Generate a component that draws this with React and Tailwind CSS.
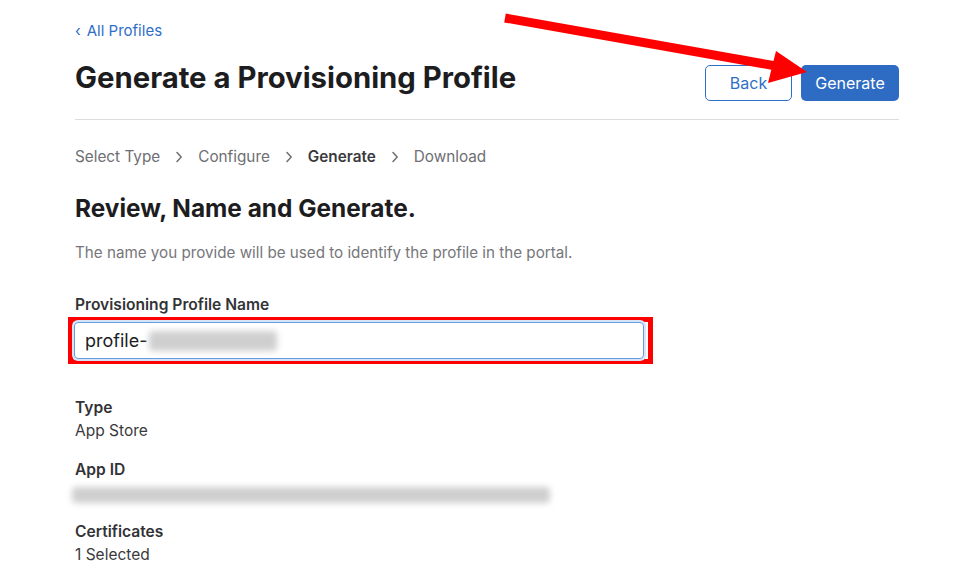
import React from "react";

const font = { fontFamily: "Inter, 'Noto Sans', sans-serif" };

function Blur({ className }) {
  return <span className={`block rounded-sm bg-[#cfcfcf] blur-[3px] ${className}`} />;
}

function Crumb({ label, active }) {
  return (
    <span className={active ? "font-semibold text-[#3a3a3c]" : "text-[#6e6e73]"}>{label}</span>
  );
}

function Chevron() {
  return (
    <svg width="8" height="12" viewBox="0 0 8 12" className="mx-[15px]">
      <path d="M2 1.5l4.2 4.5L2 10.5" fill="none" stroke="#6e6e73" strokeWidth="1.5" strokeLinecap="round" strokeLinejoin="round" />
    </svg>
  );
}

export default function App() {
  return (
    <div className="relative w-[972px] h-[574px] overflow-hidden bg-white text-[#1d1d1f]" style={font}>
      <div className="pl-[75px] pr-[73px] pt-[19px]">
        {/* back link */}
        <a className="flex items-center gap-[6px] text-[15px] leading-[24px] text-[#2f6fc7]">
          <span className="text-[15px]">‹</span> All Profiles
        </a>

        {/* header */}
        <div className="mt-[15px] flex justify-between items-start">
          <h1 className="text-[29.3px] leading-[40px] font-bold">Generate a Provisioning Profile</h1>
          <div className="mt-[7px] flex gap-[9px]">
            <button className="w-[87px] h-[36px] rounded-[5px] border border-[#2f6fc7] bg-white text-[16px] text-[#2f6fc7]">
              Back
            </button>
            <button className="w-[98px] h-[36px] rounded-[5px] bg-[#2e6cc4] text-[16px] text-white">
              Generate
            </button>
          </div>
        </div>

        <div className="mt-[18px] border-t border-[#dcdcdf]" />

        {/* steps */}
        <div className="mt-[25px] flex items-center text-[15.3px] leading-[24px]">
          <Crumb label="Select Type" />
          <Chevron />
          <Crumb label="Configure" />
          <Chevron />
          <Crumb label="Generate" active />
          <Chevron />
          <Crumb label="Download" />
        </div>

        <h2 className="mt-[23px] text-[24.4px] leading-[32px] font-bold">Review, Name and Generate.</h2>
        <p className="mt-[18px] text-[15.2px] leading-[22px] text-[#76767b]">
          The name you provide will be used to identify the profile in the portal.
        </p>

        <div className="mt-[30px] text-[15.6px] leading-[22px] font-semibold text-[#333336]">Provisioning Profile Name</div>
        <div className="mt-[1px] -ml-[7px] w-[585px] border-[5px] border-[#ff0000] pl-[1px] pr-[4px] py-[0px]">
          <div className="h-[37px] rounded-[4px] border border-[#6b9ae0] shadow-[0_0_0_2px_#d6e4f8] flex items-center pl-[10px] text-[18px] text-[#1d1d1f]">
            profile-
            <Blur className="ml-[2px] w-[128px] h-[20px]" />
          </div>
        </div>

        {/* details */}
        <div className="mt-[33px] text-[15.6px] leading-[22px] font-semibold text-[#333336]">Type</div>
        <div className="mt-[1px] text-[15.5px] leading-[22px] text-[#3a3a3c]">App Store</div>

        <div className="mt-[17px] text-[15.6px] leading-[22px] font-semibold text-[#333336]">App ID</div>
        <div className="mt-[6px] -ml-[3px] flex">
          <Blur className="w-[478px] h-[16px]" />
        </div>

        <div className="mt-[18px] text-[15.6px] leading-[22px] font-semibold text-[#333336]">Certificates</div>
        <div className="mt-[1px] text-[15.5px] leading-[22px] text-[#3a3a3c]">1 Selected</div>
      </div>

      {/* annotation arrow */}
      <svg className="absolute left-0 top-0 pointer-events-none" width="972" height="574">
        <line x1="505" y1="18" x2="776" y2="66" stroke="#ff0000" strokeWidth="9" />
        <polygon points="807,72 776,51 768,83" fill="#ff0000" />
      </svg>
    </div>
  );
}
